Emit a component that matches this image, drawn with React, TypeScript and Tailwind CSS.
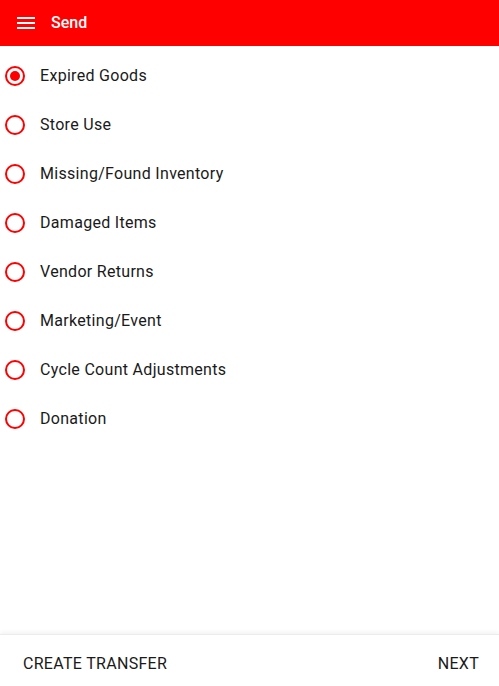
import { useState } from "react";

const reasons = [
  "Expired Goods",
  "Store Use",
  "Missing/Found Inventory",
  "Damaged Items",
  "Vendor Returns",
  "Marketing/Event",
  "Cycle Count Adjustments",
  "Donation",
];

function Radio({ checked }: { checked: boolean }) {
  return (
    <span className="flex h-5 w-5 shrink-0 items-center justify-center rounded-full border-2 border-[#ff0000]">
      {checked && <span className="block h-[10px] w-[10px] rounded-full bg-[#ff0000]" />}
    </span>
  );
}

export default function App() {
  const [selected, setSelected] = useState(0);
  return (
    <div
      className="flex h-screen flex-col bg-white text-[#1a1a1a]"
      style={{ fontFamily: "Roboto, 'Noto Sans', sans-serif" }}
    >
      <header className="flex h-[46px] shrink-0 items-center bg-[#ff0000] text-white">
        <button className="ml-[17px] flex w-[18px] flex-col gap-[3px]" aria-label="menu">
          <span className="block h-[2px] w-full bg-white" />
          <span className="block h-[2px] w-full bg-white" />
          <span className="block h-[2px] w-full bg-white" />
        </button>
        <h1 className="ml-4 text-base font-medium">Send</h1>
      </header>

      <ul className="flex-1 pt-[5px]">
        {reasons.map((r, i) => (
          <li key={r}>
            <label
              className="flex h-[49px] cursor-pointer items-center pl-[5px]"
              onClick={() => setSelected(i)}
            >
              <Radio checked={selected === i} />
              <span className="ml-[15px] text-base tracking-[0.3px]">{r}</span>
            </label>
          </li>
        ))}
      </ul>

      <footer className="flex h-[52px] shrink-0 items-center justify-between border-t border-[#ececec] px-[20px] pt-[6px] shadow-[0_-2px_4px_rgba(0,0,0,0.05)]">
        <button className="px-[3px] text-base uppercase tracking-[0.3px]">Create Transfer</button>
        <button className="text-base uppercase tracking-[0.3px]">Next</button>
      </footer>
    </div>
  );
}
